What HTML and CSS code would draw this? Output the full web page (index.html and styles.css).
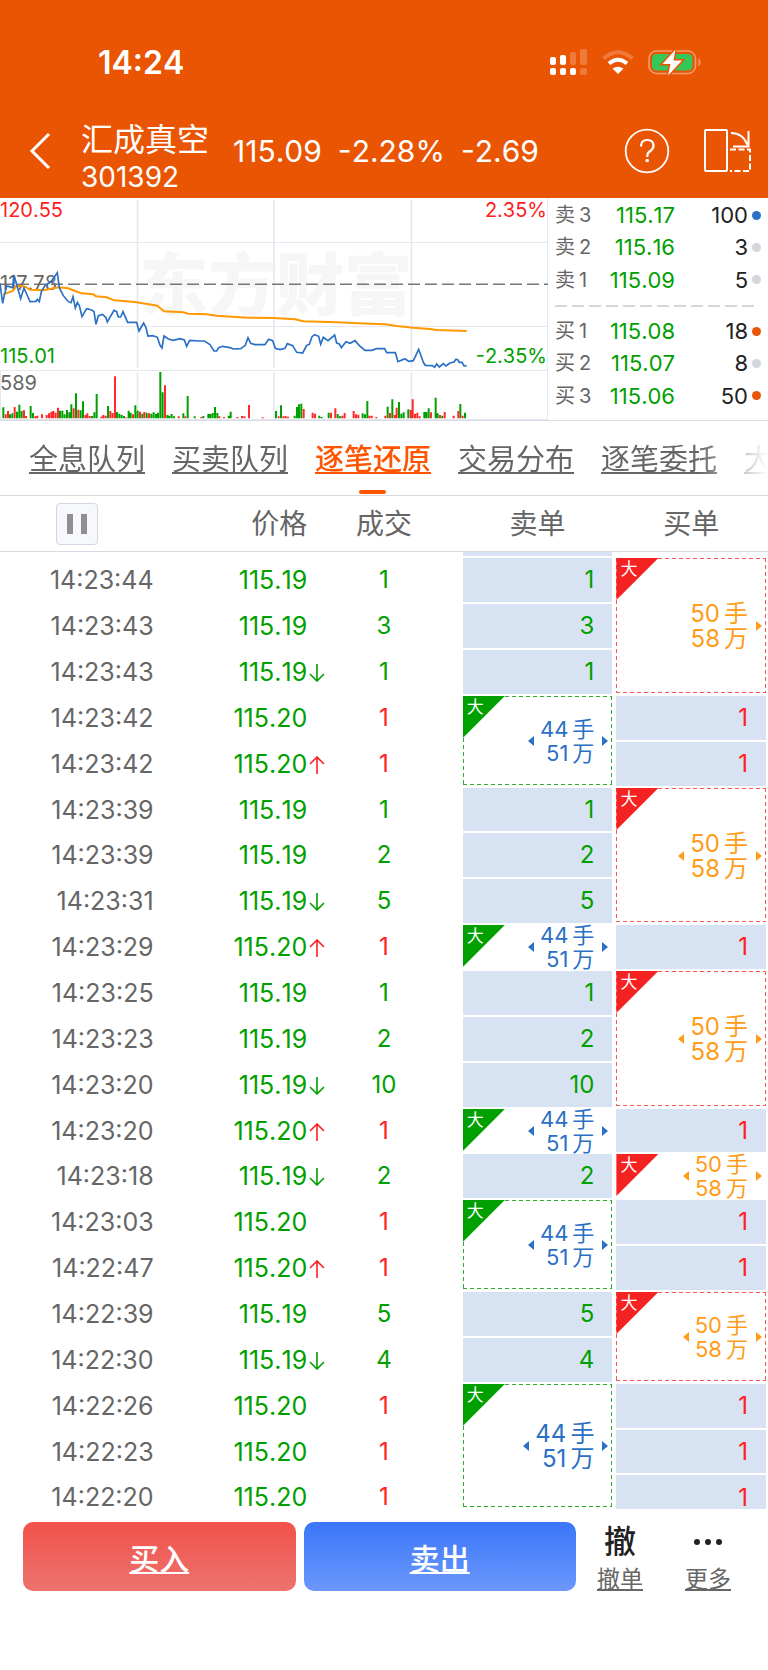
FILE: index.html
```html
<!DOCTYPE html>
<html lang="zh-CN">
<head>
<meta charset="utf-8">
<meta name="viewport" content="width=device-width, initial-scale=1">
<title>汇成真空 301392</title>
<link rel="stylesheet" href="styles.css">
</head>
<body>
<svg class="defs" aria-hidden="true">
  <symbol id="up" viewBox="0 0 16 18"><path d="M8 18V1M1 8l7-7 7 7"/></symbol>
  <symbol id="down" viewBox="0 0 16 18"><path d="M8 0v17M1 10l7 7 7-7"/></symbol>
</svg>
<header class="top">
  <div class="status">
    <time class="clock">14:24</time>
    <div class="status-icons">
      <svg width="38" height="27" viewBox="0 0 38 27" fill="#fff" aria-label="信号">
        <rect x="0" y="8" width="6" height="8" rx="2"/><rect x="10" y="6" width="6" height="10" rx="2"/>
        <rect x="20" y="3" width="6" height="13" rx="2" opacity=".22"/><rect x="30" y="0" width="7" height="16" rx="2" opacity=".22"/>
        <rect x="0" y="19" width="6" height="7" rx="2"/><rect x="10" y="19" width="6" height="7" rx="2"/><rect x="20" y="19" width="6" height="7" rx="2"/><rect x="30" y="19" width="7" height="7" rx="2" opacity=".22"/>
      </svg>
      <svg width="32" height="27" viewBox="0 0 32 27" fill="none" stroke="#fff" stroke-width="4" aria-label="无线网络">
        <path d="M1.5 9.5Q16-3 30.500 9.500" opacity=".22"/><path d="M7 14.500Q16 7 25 14.500"/><path d="M16 25l-5.500-5.500Q16 16 21.500 19.500z" fill="#fff" stroke="none"/>
      </svg>
      <svg width="54" height="27" viewBox="0 0 54 27" aria-label="充电中">
        <rect x="1" y="2" width="46.500" height="22.500" rx="7.500" fill="none" stroke="#fff" stroke-opacity=".42" stroke-width="1.600"/>
        <rect x="4" y="5" width="40.500" height="16.500" rx="4.500" fill="#35c759"/>
        <path d="M50.500 9v8.500q2-1.500 2-4.200T50.500 9z" fill="#fff" opacity=".42"/>
        <path d="M27.500.500L14.500 15h8L20 26.500 34 11.500h-8.500z" fill="#fff" stroke="#ea5504" stroke-width="3" paint-order="stroke"/>
      </svg>
    </div>
  </div>
  <div class="stock-bar">
    <button class="back" type="button" aria-label="返回"><svg width="22" height="38" viewBox="0 0 22 38"><path d="M20 2L3 19l17 17" fill="none" stroke="#fff" stroke-width="3"/></svg></button>
    <h1 class="stock"><span class="stock-name">汇成真空</span><span class="stock-code">301392</span></h1>
    <p class="quote"><span>115.09</span><span>-2.28%</span><span>-2.69</span></p>
    <div class="tools">
      <button type="button" aria-label="帮助"><svg width="46" height="46" viewBox="0 0 46 46" fill="none" stroke="#fff" stroke-width="1.800"><circle cx="23" cy="23" r="21.300"/><path d="M17 18.500q0-6.500 6.200-6.500 6.300 0 6.300 5.800 0 3-3.200 5.200-3 2-3 4.500v1.500" stroke-width="2.200"/><circle cx="23.200" cy="32.500" r="1.800" fill="#fff" stroke="none"/></svg></button>
      <button type="button" aria-label="横屏"><svg width="47" height="44" viewBox="0 0 47 44" fill="none" stroke="#fff" stroke-width="2"><rect x="1" y="1" width="22" height="41" rx="1"/><path d="M27 4q12 0 16.500 12M44.500 2v15.500H29"/><path d="M26 20.500h20V42H26" stroke-dasharray="6 2.500"/></svg></button>
    </div>
  </div>
</header>
<main>
  <section class="market">
    <svg class="chart" viewBox="0 0 548 222" role="img" aria-label="分时走势">
      <text class="watermark" x="140" y="112">东方财富</text>
      <g class="grid">
        <path d="M137.500 2v168M274 2v168M411.500 2v168M137.500 174v47M274 174v47M411.500 174v47" stroke-width="1.600"/>
        <path d="M0 44.500h548M0 128.500h548M0 172.500h548M0 221.500h548M547.500 0v221M.500 172v49"/>
      </g>
      <path d="M0 86.300h548" class="mid"/>
      <text class="lbl gray" x="0" y="92">117.78</text>
      <g transform="translate(0 -3) scale(.33333)">
        <path class="avg" d="M10 298L38 288 50 272 75 275 90 284 130 286 175 277 205 280 225 288 245 295 280 298 288 304 320 307 342 316 380 319 410 322 472 332 492 349 550 352 565 356 620 358 650 362 745 368 820 369 885 373 910 379 1010 382 1110 386 1155 388 1190 393 1240 398 1290 402 1310 405 1400 408"/>
        <path class="price-line" d="M0 265L8 325 14 296 20 273 28 275 38 278 42 240 48 262 62 311 72 279 80 297 90 320 108 319 112 313 118 320 124 290 135 272 150 262 155 257 165 243 172 233 178 278 190 302 205 320 213 323 219 305 226 339 232 322 238 332 246 365 260 341 275 345 282 350 288 388 295 362 308 358 318 368 322 381 342 346 350 350 355 366 362 366 369 350 383 382 410 382 417 408 431 384 438 398 444 423 458 422 472 427 480 451 486 459 492 423 505 432 520 436 540 431 553 435 560 454 569 436 600 438 613 438 630 449 642 468 650 468 656 458 668 454 690 458 700 462 722 461 736 451 744 428 752 445 765 449 795 449 806 433 818 437 826 460 840 464 855 460 862 446 878 452 890 472 908 474 920 451 928 448 936 425 944 419 956 424 962 448 970 427 984 437 1004 420 1010 444 1018 447 1024 458 1038 440 1050 445 1065 437 1078 452 1095 466 1115 466 1130 461 1154 461 1160 473 1186 473 1194 500 1208 494 1216 492 1226 499 1240 497 1256 463 1270 502 1276 511 1298 512 1304 517 1310 507 1318 516 1330 506 1338 513 1350 504 1362 501 1368 493 1374 495 1378 502 1386 502 1392 512 1400 513"/>
        <path class="vol-down" d="M10 670V637M30 670V658M37 670V655M51 670V650M58 670V629M65 670V648M92 670V633M99 670V654M180 670V647M187 670V647M194 670V658M201 670V645M208 670V652M214 670V628M228 670V595M242 670V646M249 670V619M276 670V663M283 670V652M290 670V597M324 670V633M351 670V651M358 670V656M365 670V660M372 670V663M386 670V647M392 670V653M406 670V631M413 670V647M427 670V656M440 670V653M454 670V656M461 670V652M468 670V657M474 670V653M481 670V531M488 670V592M502 670V660M508 670V662M515 670V657M522 670V664M550 670V655M563 670V603M584 670V664M610 670V663M625 670V657M631 670V657M638 670V654M645 670V636M652 670V654M686 670V662M692 670V650M828 670V648M843 670V631M884 670V662M891 670V636M897 670V628M904 670V626M958 670V662M965 670V666M986 670V653M1013 670V657M1020 670V664M1088 670V655M1095 670V658M1102 670V618M1163 670V635M1177 670V613M1197 670V621M1204 670V656M1211 670V652M1225 670V643M1273 670V651M1279 670V651M1286 670V640M1307 670V608M1313 670V655M1327 670V662M1381 670V627M1395 670V653"/>
        <path class="vol-up" d="M17 670V658M24 670V648M44 670V636M72 670V646M78 670V663M106 670V664M112 670V662M126 670V658M140 670V660M147 670V655M154 670V650M160 670V648M167 670V653M174 670V638M221 670V640M235 670V644M256 670V660M262 670V655M269 670V663M304 670V665M310 670V660M317 670V662M331 670V648M338 670V654M345 670V544M379 670V667M399 670V658M420 670V650M433 670V651M447 670V655M495 670V571M536 670V664M556 670V664M604 670V666M658 670V664M672 670V666M712 670V666M726 670V663M733 670V664M747 670V630M788 670V667M836 670V664M850 670V664M857 670V663M864 670V665M911 670V642M938 670V653M945 670V656M993 670V653M1006 670V640M1027 670V662M1034 670V654M1061 670V648M1068 670V658M1075 670V659M1108 670V662M1115 670V662M1129 670V666M1156 670V662M1170 670V654M1184 670V660M1190 670V638M1232 670V645M1238 670V613M1245 670V656M1252 670V653M1259 670V664M1293 670V652M1320 670V660M1334 670V651M1361 670V662M1375 670V648M1388 670V662"/>
      </g>
      <text class="lbl red" x="0" y="19">120.55</text>
      <text class="lbl green" x="0" y="165">115.01</text>
      <text class="lbl red end" x="547" y="19">2.35%</text>
      <text class="lbl green end" x="547" y="165">-2.35%</text>
      <text class="lbl gray" x="0" y="192">589</text>
    </svg>
    <ul class="book">
      <li><span class="side">卖<b>3</b></span><span class="green">115.17</span><span class="qty">100</span><i class="dot blue-dot"></i></li>
      <li><span class="side">卖<b>2</b></span><span class="green">115.16</span><span class="qty">3</span><i class="dot"></i></li>
      <li><span class="side">卖<b>1</b></span><span class="green">115.09</span><span class="qty">5</span><i class="dot"></i></li>
      <li class="split" role="separator"></li>
      <li><span class="side">买<b>1</b></span><span class="green">115.08</span><span class="qty">18</span><i class="dot orange-dot"></i></li>
      <li><span class="side">买<b>2</b></span><span class="green">115.07</span><span class="qty">8</span><i class="dot"></i></li>
      <li><span class="side">买<b>3</b></span><span class="green">115.06</span><span class="qty">50</span><i class="dot orange-dot"></i></li>
    </ul>
  </section>
  <nav class="tabs">
    <a href="#">全息队列</a><a href="#">买卖队列</a><a href="#" class="active" aria-current="page">逐笔还原</a><a href="#">交易分布</a><a href="#">逐笔委托</a><a href="#">大</a>
  </nav>
  <table class="ticks">
    <thead>
      <tr><th class="time"><button class="pause" type="button" aria-label="暂停"></button></th><th class="price">价格</th><th>成交</th><th>卖单</th><th>买单</th></tr>
    </thead>
    <tbody>
      <tr class="sliver"><td></td><td></td><td></td><td class="lot"></td><td></td></tr>
      <tr><td class="time">14:23:44</td><td class="price">115.19</td><td class="vol green">1</td><td class="lot green">1</td>
        <td class="order buy large" rowspan="3"><span class="tag">大</span><div class="sum"><p>50<b>手</b><br>58<b>万</b></p><i class="next"></i></div></td></tr>
      <tr><td class="time">14:23:43</td><td class="price">115.19</td><td class="vol green">3</td><td class="lot green">3</td></tr>
      <tr><td class="time">14:23:43</td><td class="price"><span class="move">115.19<svg class="green"><use href="#down"/></svg></span></td><td class="vol green">1</td><td class="lot green">1</td></tr>
      <tr><td class="time">14:23:42</td><td class="price">115.20</td><td class="vol red">1</td>
        <td class="order sell" rowspan="2"><span class="tag">大</span><div class="sum"><i class="prev"></i><p>44<b>手</b><br>51<b>万</b></p><i class="next"></i></div></td><td class="lot red">1</td></tr>
      <tr><td class="time">14:23:42</td><td class="price"><span class="move">115.20<svg class="red"><use href="#up"/></svg></span></td><td class="vol red">1</td><td class="lot red">1</td></tr>
      <tr><td class="time">14:23:39</td><td class="price">115.19</td><td class="vol green">1</td><td class="lot green">1</td>
        <td class="order buy large" rowspan="3"><span class="tag">大</span><div class="sum"><i class="prev"></i><p>50<b>手</b><br>58<b>万</b></p><i class="next"></i></div></td></tr>
      <tr><td class="time">14:23:39</td><td class="price">115.19</td><td class="vol green">2</td><td class="lot green">2</td></tr>
      <tr><td class="time">14:23:31</td><td class="price"><span class="move">115.19<svg class="green"><use href="#down"/></svg></span></td><td class="vol green">5</td><td class="lot green">5</td></tr>
      <tr><td class="time">14:23:29</td><td class="price"><span class="move">115.20<svg class="red"><use href="#up"/></svg></span></td><td class="vol red">1</td>
        <td class="order sell single"><span class="tag">大</span><div class="sum"><i class="prev"></i><p>44<b>手</b><br>51<b>万</b></p><i class="next"></i></div></td><td class="lot red">1</td></tr>
      <tr><td class="time">14:23:25</td><td class="price">115.19</td><td class="vol green">1</td><td class="lot green">1</td>
        <td class="order buy large" rowspan="3"><span class="tag">大</span><div class="sum"><i class="prev"></i><p>50<b>手</b><br>58<b>万</b></p><i class="next"></i></div></td></tr>
      <tr><td class="time">14:23:23</td><td class="price">115.19</td><td class="vol green">2</td><td class="lot green">2</td></tr>
      <tr><td class="time">14:23:20</td><td class="price"><span class="move">115.19<svg class="green"><use href="#down"/></svg></span></td><td class="vol green">10</td><td class="lot green">10</td></tr>
      <tr><td class="time">14:23:20</td><td class="price"><span class="move">115.20<svg class="red"><use href="#up"/></svg></span></td><td class="vol red">1</td>
        <td class="order sell single"><span class="tag">大</span><div class="sum"><i class="prev"></i><p>44<b>手</b><br>51<b>万</b></p><i class="next"></i></div></td><td class="lot red">1</td></tr>
      <tr><td class="time">14:23:18</td><td class="price"><span class="move">115.19<svg class="green"><use href="#down"/></svg></span></td><td class="vol green">2</td><td class="lot green">2</td>
        <td class="order buy single"><span class="tag">大</span><div class="sum"><i class="prev"></i><p>50<b>手</b><br>58<b>万</b></p><i class="next"></i></div></td></tr>
      <tr><td class="time">14:23:03</td><td class="price">115.20</td><td class="vol red">1</td>
        <td class="order sell" rowspan="2"><span class="tag">大</span><div class="sum"><i class="prev"></i><p>44<b>手</b><br>51<b>万</b></p><i class="next"></i></div></td><td class="lot red">1</td></tr>
      <tr><td class="time">14:22:47</td><td class="price"><span class="move">115.20<svg class="red"><use href="#up"/></svg></span></td><td class="vol red">1</td><td class="lot red">1</td></tr>
      <tr><td class="time">14:22:39</td><td class="price">115.19</td><td class="vol green">5</td><td class="lot green">5</td>
        <td class="order buy" rowspan="2"><span class="tag">大</span><div class="sum"><i class="prev"></i><p>50<b>手</b><br>58<b>万</b></p><i class="next"></i></div></td></tr>
      <tr><td class="time">14:22:30</td><td class="price"><span class="move">115.19<svg class="green"><use href="#down"/></svg></span></td><td class="vol green">4</td><td class="lot green">4</td></tr>
      <tr><td class="time">14:22:26</td><td class="price">115.20</td><td class="vol red">1</td>
        <td class="order sell large" rowspan="3"><span class="tag">大</span><div class="sum"><i class="prev"></i><p>44<b>手</b><br>51<b>万</b></p><i class="next"></i></div></td><td class="lot red">1</td></tr>
      <tr><td class="time">14:22:23</td><td class="price">115.20</td><td class="vol red">1</td><td class="lot red">1</td></tr>
      <tr class="last"><td class="time">14:22:20</td><td class="price">115.20</td><td class="vol red">1</td><td class="lot red">1</td></tr>
    </tbody>
  </table>
</main>
<footer class="trade">
  <button class="trade-btn buy-btn" type="button">买入</button>
  <button class="trade-btn sell-btn" type="button">卖出</button>
  <a class="action" href="#"><span class="action-icon">撤</span><span class="action-name">撤单</span></a>
  <a class="action" href="#"><span class="action-icon"><svg width="30" height="8" viewBox="0 0 30 8" fill="#222"><circle cx="4" cy="4" r="3"/><circle cx="15" cy="4" r="3"/><circle cx="26" cy="4" r="3"/></svg></span><span class="action-name">更多</span></a>
</footer>
</body>
</html>
```
FILE: styles.css
```css
* { box-sizing: border-box; }
body {
  margin: 0;
  min-height: 100vh;
  background: #fff;
  color: #666;
  font-family: Inter, "Noto Sans CJK SC", sans-serif;
  font-size: 24px;
  font-kerning: none;
  overflow-x: hidden;
}
button { border: 0; padding: 0; background: none; font: inherit; color: inherit; }
h1, p, ul { margin: 0; padding: 0; font-weight: 400; }
b, i { font-weight: inherit; font-style: normal; }
svg { display: block; }
.defs { display: none; }
.green { color: #00a000; fill: #00a000; }
.red { color: #ff2020; fill: #ff2020; }
.gray { fill: #666; }

.top { background: #ea5504; color: #fff; padding-top: 42px; }
.status { display: flex; justify-content: space-between; align-items: center; height: 40px; padding: 0 66px 0 98px; }
.clock { font-size: 32px; font-weight: 600; }
.status-icons { display: flex; gap: 14px; }
.stock-bar { display: flex; align-items: center; height: 116px; padding: 22px 17px 0 29px; }
.back { width: 22px; margin-right: 30px; }
.stock { display: flex; flex-direction: column; align-self: flex-end; width: 152px; margin-bottom: 4px; }
.stock-name { font-size: 32px; line-height: 40px; white-space: nowrap; }
.stock-code { font-size: 28px; line-height: 34px; }
.quote { display: flex; gap: 16px; font-size: 30px; white-space: nowrap; }
.tools { display: flex; align-items: center; gap: 34px; margin-left: auto; }

.market { display: grid; grid-template-columns: minmax(0, 548fr) minmax(0, 220fr); border-bottom: 1px solid #d9dbe3; }
.chart { width: 100%; }
.grid { stroke: #e6e8f0; fill: none; }
.mid { stroke: #777; stroke-width: 1.4; stroke-dasharray: 12 5; }
.watermark { font-size: 68px; font-weight: 900; fill: #f6f6f6; }
.lbl { font-size: 20px; }
.end { text-anchor: end; }
.avg { fill: none; stroke: #ff9800; stroke-width: 6; }
.price-line { fill: none; stroke: #2a70c4; stroke-width: 5; }
.vol-down { stroke: #00a000; stroke-width: 6; }
.vol-up { stroke: #ff2a2a; stroke-width: 6; }
.book { display: flex; flex-direction: column; list-style: none; padding: 1px 7px 8px 7px; font-size: 22px; }
.book li { flex: 1; display: grid; grid-template-columns: 40px 80px 1fr 9px; align-items: center; }
.book li > span { text-align: right; line-height: 28px; }
.book .side { text-align: left; font-size: 20px; white-space: nowrap; }
.side b { margin-left: 4px; }
.book .qty { color: #222; padding-right: 4px; }
.dot { width: 9px; height: 9px; border-radius: 50%; background: #d3d6dc; }
.blue-dot { background: #2a70c4; }
.orange-dot { background: #ea5504; }
.book .split { flex: 0 0 19px; background: repeating-linear-gradient(90deg, #d3d6dc 0 12px, transparent 12px 17px) 0 9px / 202px 2px no-repeat; }

.tabs {
  display: flex; gap: 27px; height: 75px; padding: 0 0 0 29px; overflow: hidden;
  border-bottom: 1px solid #d6d8e2; font-size: 29px; line-height: 42px;
  -webkit-mask: linear-gradient(#000, #000) bottom / 100% 1px no-repeat, linear-gradient(90deg, #000 calc(100% - 70px), transparent);
  mask: linear-gradient(#000, #000) bottom / 100% 1px no-repeat, linear-gradient(90deg, #000 calc(100% - 70px), transparent);
}
.tabs a { flex: none; position: relative; padding-top: 18px; color: #666; text-decoration: underline; text-decoration-thickness: 2px; text-underline-offset: 2px; }
.tabs .active { color: #ff5500; font-weight: 500; }
.tabs .active::after { content: ""; position: absolute; left: calc(50% - 14px); bottom: 1px; width: 27px; height: 4px; border-radius: 2px; background: #ff5500; }

.ticks { width: 100%; table-layout: fixed; border-collapse: separate; border-spacing: 0; line-height: 28px; }
.ticks th { height: 56px; padding: 0; border-bottom: 1px solid #d6d8e2; font-size: 28px; font-weight: 400; }
.ticks td { height: 46px; padding: 0; text-align: center; }
.ticks tbody tr:nth-child(7n) td { height: 45px; }
.ticks .time { text-align: right; }
.ticks .price { text-align: right; color: #00a000; }
.ticks td.time, .ticks td.price { font-size: 25px; }
.ticks th.time { padding-right: 56px; }
.ticks th.price { color: #666; }
.pause {
  display: block; width: 42px; height: 42px; margin-left: auto; border: 1px solid #d3d7e2; border-radius: 4px;
  background: linear-gradient(#8e8e93, #8e8e93) 10px 10px / 6px 20px no-repeat, linear-gradient(#8e8e93, #8e8e93) 24px 10px / 6px 20px no-repeat, #f7f8fb;
}
.move { position: relative; }
.move svg { position: absolute; left: calc(100% + 2px); top: 7px; width: 16px; height: 18px; fill: none; stroke: currentColor; stroke-width: 1.6; }
.ticks .lot { border: 1px solid transparent; border-width: 1px 2px; background: #d7e3f2; background-clip: padding-box; text-align: right; padding-right: 18px; }
.ticks .sliver td { height: 5px; border-top: 0; }
.ticks tbody .last td { height: 35px; padding-top: 14px; line-height: 18px; vertical-align: top; }
.ticks .last .lot { border-bottom: 0; }
.ticks .order { position: relative; --edge: #f55; }
.ticks .order.sell { --edge: #2cae2c; color: #2a70c4; }
.ticks .order.buy { color: #ff9c1a; }
.order::before {
  content: ""; position: absolute; inset: 1px 2px 2px;
  background:
    repeating-linear-gradient(90deg, var(--edge) 0 4px, transparent 4px 7px) top / 100% 1px no-repeat,
    repeating-linear-gradient(90deg, var(--edge) 0 4px, transparent 4px 7px) bottom / 100% 1px no-repeat,
    repeating-linear-gradient(var(--edge) 0 4px, transparent 4px 7px) left / 1px 100% no-repeat,
    repeating-linear-gradient(var(--edge) 0 4px, transparent 4px 7px) right / 1px 100% no-repeat;
}
.order.single::before { display: none; }
.tag {
  position: absolute; left: 2px; top: 1px; width: 42px; height: 42px; padding: 1px 0 0 4px;
  background: #f52222; clip-path: polygon(0 0, 100% 0, 0 100%);
  color: #fff; font-size: 17px; line-height: 20px; text-align: left;
}
.sell .tag { background: #00a000; }
.sum { display: flex; align-items: center; justify-content: flex-end; padding-right: 6px; font-size: 22px; line-height: 24px; text-align: right; }
.single .sum { margin: -4px 0; }
.large .sum { font-size: 24px; line-height: 25px; }
.sum b { margin-left: 4px; }
.prev, .next { border: 5px solid transparent; border-width: 5px 0; }
.prev { border-right: 6px solid; margin-right: 6px; }
.next { border-left: 6px solid; margin-left: 8px; }

.trade { display: flex; padding: 13px 16px 0 23px; }
.trade-btn { flex: 1; height: 69px; border-radius: 10px; color: #fff; font-size: 30px; font-weight: 500; text-decoration: underline; text-decoration-thickness: 2px; text-underline-offset: 2px; }
.buy-btn { margin-right: 8px; background: linear-gradient(#f2524b, #ec736e); }
.sell-btn { background: linear-gradient(#3a76f8, #6c98fd); }
.action { width: 88px; display: flex; flex-direction: column; align-items: center; color: #666; text-decoration: none; }
.action-icon { display: flex; align-items: center; height: 40px; color: #222; font-size: 32px; font-weight: 500; line-height: 40px; }
.action-name { font-size: 23px; line-height: 34px; text-decoration: underline; text-underline-offset: 2px; }
```
